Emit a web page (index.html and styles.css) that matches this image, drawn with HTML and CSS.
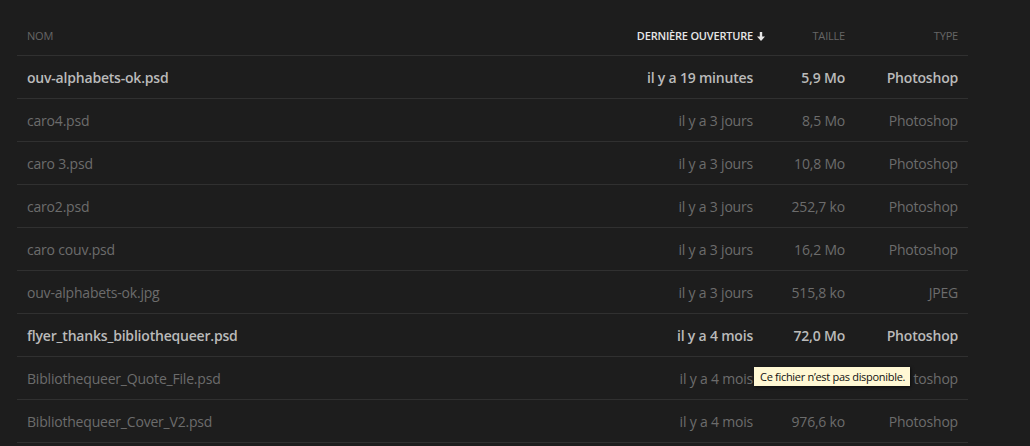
FILE: index.html
```html
<!DOCTYPE html>
<html lang="fr">
<head>
    <meta charset="UTF-8">
    <meta name="viewport" content="width=device-width, initial-scale=1.0">
    <title>Fichiers récents</title>
    <link rel="stylesheet" href="styles.css">
</head>
<body>
    <div class="files">
        <div class="row head">
            <div class="cell">Nom</div>
            <div class="cell right active">Dernière ouverture<svg class="arrow" width="8" height="9" viewBox="0 0 8 9"><path d="M2.8 0h2.4v4.6H8L4 9 0 4.6h2.8z" fill="currentColor"/></svg></div>
            <div class="cell right">Taille</div>
            <div class="cell right">Type</div>
        </div>

        <div class="row on">
            <div class="cell">ouv-alphabets-ok.psd</div>
            <div class="cell right">il y a 19 minutes</div>
            <div class="cell right">5,9 Mo</div>
            <div class="cell right">Photoshop</div>
        </div>
        <div class="row">
            <div class="cell">caro4.psd</div>
            <div class="cell right">il y a 3 jours</div>
            <div class="cell right">8,5 Mo</div>
            <div class="cell right">Photoshop</div>
        </div>
        <div class="row">
            <div class="cell">caro 3.psd</div>
            <div class="cell right">il y a 3 jours</div>
            <div class="cell right">10,8 Mo</div>
            <div class="cell right">Photoshop</div>
        </div>
        <div class="row">
            <div class="cell">caro2.psd</div>
            <div class="cell right">il y a 3 jours</div>
            <div class="cell right">252,7 ko</div>
            <div class="cell right">Photoshop</div>
        </div>
        <div class="row">
            <div class="cell">caro couv.psd</div>
            <div class="cell right">il y a 3 jours</div>
            <div class="cell right">16,2 Mo</div>
            <div class="cell right">Photoshop</div>
        </div>
        <div class="row">
            <div class="cell">ouv-alphabets-ok.jpg</div>
            <div class="cell right">il y a 3 jours</div>
            <div class="cell right">515,8 ko</div>
            <div class="cell right">JPEG</div>
        </div>
        <div class="row on">
            <div class="cell">flyer_thanks_bibliothequeer.psd</div>
            <div class="cell right">il y a 4 mois</div>
            <div class="cell right">72,0 Mo</div>
            <div class="cell right">Photoshop</div>
        </div>
        <div class="row">
            <div class="cell">Bibliothequeer_Quote_File.psd</div>
            <div class="cell right">il y a 4 mois</div>
            <div class="cell right"></div>
            <div class="cell right tip-host"><span class="hidden-part">Pho</span>toshop<span class="tip">Ce fichier n’est pas disponible.</span></div>
        </div>
        <div class="row">
            <div class="cell">Bibliothequeer_Cover_V2.psd</div>
            <div class="cell right">il y a 4 mois</div>
            <div class="cell right">976,6 ko</div>
            <div class="cell right">Photoshop</div>
        </div>
    </div>
</body>
</html>
```

FILE: styles.css
```css
* {
    margin: 0;
    padding: 0;
    box-sizing: border-box;
}
body {
    background-color: #1d1d1d;
    font-family: "Open Sans", "Noto Sans", sans-serif;
    color: #6c6c6c;
    overflow: hidden;
}
.files {
    margin-left: 17px;
    width: 951px;
}
.row {
    display: grid;
    grid-template-columns: 1fr 150px 92px 113px;
    height: 43px;
    align-items: center;
    border-bottom: 1px solid #303030;
    font-size: 14px;
    letter-spacing: -0.2px;
}
.cell {
    padding: 0 10px;
    white-space: nowrap;
}
.right {
    text-align: right;
}
.head {
    height: 56px;
    align-items: end;
    padding-bottom: 12px;
    font-size: 11px;
    letter-spacing: -0.2px;
    text-transform: uppercase;
    color: #666;
}
.head .active {
    color: #e6e6e6;
    font-weight: 600;
    position: relative;
}
.arrow {
    position: absolute;
    right: -2px;
    top: 4px;
}
.on {
    color: #bababa;
    font-weight: 600;
}
.tip-host {
    position: relative;
}
.hidden-part {
    visibility: hidden;
}
.tip {
    position: absolute;
    left: -101px;
    top: -2px;
    background-color: #fff8d4;
    color: #111;
    font-size: 11px;
    font-weight: 400;
    letter-spacing: -0.3px;
    padding: 2px 5px 2px 6px;
    box-shadow: 1px 1px 3px rgba(0, 0, 0, 0.6);
}
```
